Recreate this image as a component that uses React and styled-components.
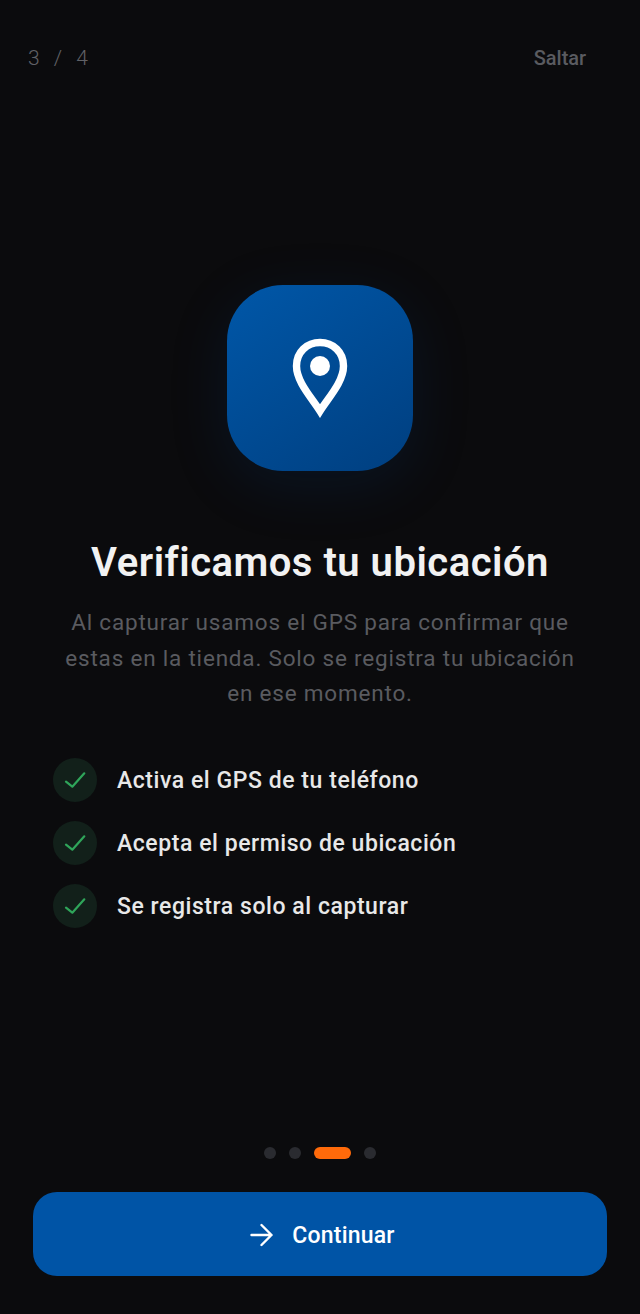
import React from 'react'
import styled, { createGlobalStyle } from 'styled-components'

const GlobalStyle = createGlobalStyle`
    html, body {
        margin: 0;
        padding: 0;
        background: #0b0b0d;
    }
    * {
        box-sizing: border-box;
    }
`

const Page = styled.div`
    width: 640px;
    height: 1314px;
    overflow: hidden;
    display: flex;
    flex-direction: column;
    background: #0b0b0d;
    font-family: Roboto, "Liberation Sans", sans-serif;
`
const TopBar = styled.header`
    height: 40px;
    margin-top: 38px;
    padding: 0 54px 0 28px;
    display: flex;
    align-items: center;
    justify-content: space-between;
`
const StepCount = styled.span`
    font-size: 21px;
    font-weight: 300;
    letter-spacing: 2px;
    word-spacing: 5px;
    color: #606166;
`
const SkipButton = styled.button`
    border: none;
    background: none;
    padding: 0;
    font-family: inherit;
    font-size: 20px;
    font-weight: 500;
    letter-spacing: -0.05px;
    color: #5a5b60;
`
const Hero = styled.div`
    margin-top: 207px;
    align-self: center;
    width: 186px;
    height: 186px;
    border-radius: 56px;
    display: flex;
    align-items: center;
    justify-content: center;
    background: linear-gradient(145deg, #0057a8, #003f80);
    box-shadow: 0 14px 60px rgba(0, 70, 150, 0.16);
`
const Title = styled.h1`
    margin: 69px 0 0;
    text-align: center;
    font-size: 40px;
    line-height: 46px;
    font-weight: 600;
    letter-spacing: 0.5px;
    color: #f2f2f2;
`
const Description = styled.p`
    margin: 19px 0 0;
    padding: 0 62px;
    text-align: center;
    font-size: 22.5px;
    line-height: 35.5px;
    letter-spacing: 0.8px;
    color: #5a5b60;
`
const CheckList = styled.ul`
    list-style: none;
    margin: 46px 0 0;
    padding: 0 0 0 53px;
    display: flex;
    flex-direction: column;
    gap: 19px;
`
const CheckRow = styled.li`
    display: flex;
    align-items: center;
    gap: 20px;
    font-size: 23px;
    font-weight: 500;
    letter-spacing: 0.55px;
    color: #e8e8e8;
`
const CheckLabel = styled.span`
    padding-top: 2px;
`
const CheckCircle = styled.span`
    width: 44px;
    height: 44px;
    border-radius: 50%;
    display: flex;
    align-items: center;
    justify-content: center;
    background: #12201a;
`
const Dots = styled.div`
    margin-top: auto;
    display: flex;
    justify-content: center;
    gap: 13px;
`
const Dot = styled.span`
    width: ${props => props.$active ? '37px' : '12px'};
    height: 12px;
    border-radius: 6px;
    background: ${props => props.$active ? '#ff6a0a' : '#2a2b30'};
`
const ContinueButton = styled.button`
    margin: 33px 33px 38px;
    height: 84px;
    padding: 2px 0 0 3px;
    border: none;
    border-radius: 24px;
    display: flex;
    align-items: center;
    justify-content: center;
    gap: 18px;
    background: #0054a6;
    color: #fff;
    font-family: inherit;
    font-size: 23px;
    font-weight: 500;
    letter-spacing: 0.2px;
`

const items = [
    'Activa el GPS de tu teléfono',
    'Acepta el permiso de ubicación',
    'Se registra solo al capturar',
]

const PinIcon = () => (
    <svg width="56" height="80" viewBox="0 0 56 80" fill="none">
        <path
            d="M28 73 C20 60 4.5 44 4.5 28 C4.5 14 15 4.5 28 4.5 C41 4.5 51.5 14 51.5 28 C51.5 44 36 60 28 73 Z"
            stroke="#fff"
            strokeWidth="7.4"
            strokeLinejoin="miter"
        />
        <circle cx="28" cy="28" r="10" fill="#fff" />
    </svg>
)

const CheckIcon = () => (
    <svg width="24" height="24" viewBox="0 0 24 24" fill="none">
        <path d="M3 13.7 L9.3 18.7 L21.3 5.3" stroke="#2fa55a" strokeWidth="2.2" strokeLinecap="round" strokeLinejoin="round" />
    </svg>
)

const ArrowIcon = () => (
    <svg width="26" height="24" viewBox="0 0 26 24" fill="none">
        <path d="M3.5 12 H23.5 M13.5 2 L23.5 12 L13.5 22" stroke="#fff" strokeWidth="2.4" strokeLinecap="round" strokeLinejoin="round" />
    </svg>
)

const App = () => (
    <Page>
        <GlobalStyle />
        <TopBar>
            <StepCount>3 / 4</StepCount>
            <SkipButton>Saltar</SkipButton>
        </TopBar>
        <Hero>
            <PinIcon />
        </Hero>
        <Title>Verificamos tu ubicación</Title>
        <Description>
            Al capturar usamos el GPS para confirmar que estas en la tienda. Solo se registra tu ubicación en ese momento.
        </Description>
        <CheckList>
            {items.map(item => (
                <CheckRow key={item}>
                    <CheckCircle><CheckIcon /></CheckCircle>
                    <CheckLabel>{item}</CheckLabel>
                </CheckRow>
            ))}
        </CheckList>
        <Dots>
            <Dot />
            <Dot />
            <Dot $active />
            <Dot />
        </Dots>
        <ContinueButton>
            <ArrowIcon />
            Continuar
        </ContinueButton>
    </Page>
)

export default App
